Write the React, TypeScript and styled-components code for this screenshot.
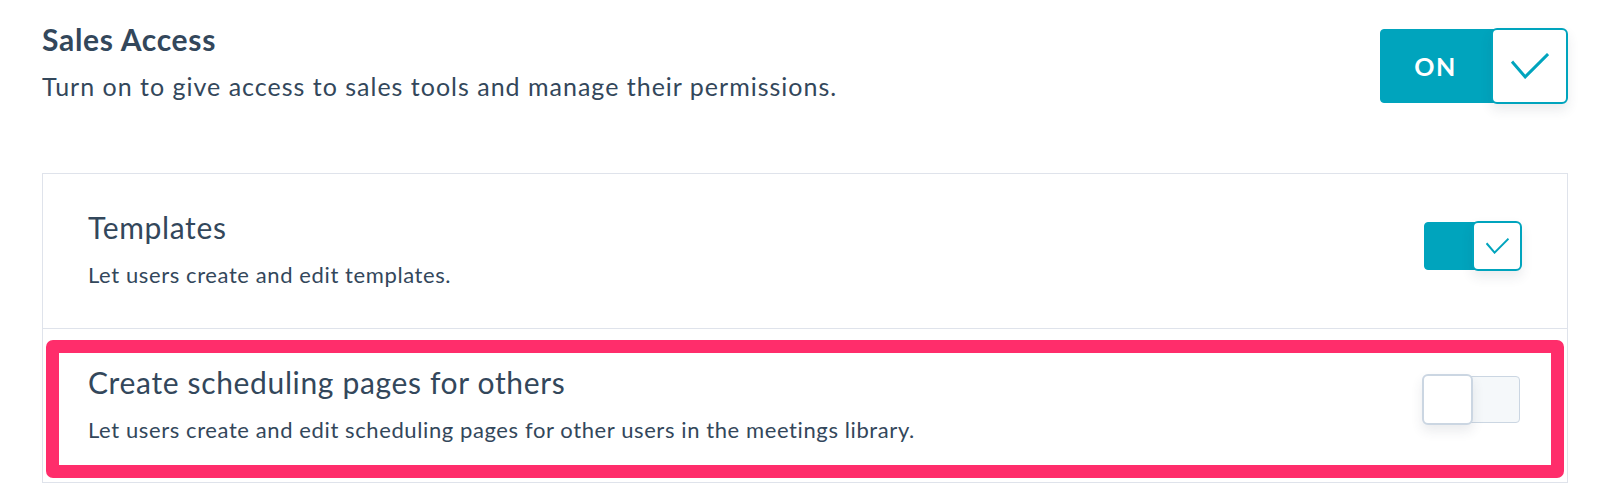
import styled, { createGlobalStyle } from "styled-components";

const GlobalStyle = createGlobalStyle`
  html, body {
    margin: 0;
    padding: 0;
    background: #fff;
  }
  body {
    font-family: Lato, "Open Sans", "Liberation Sans", sans-serif;
    color: #33475b;
    -webkit-font-smoothing: antialiased;
  }
`;

const Page = styled.div`
  width: 1526px;
  margin-left: 42px;
`;

const Header = styled.header`
  display: flex;
  justify-content: space-between;
  align-items: flex-start;
  padding-top: 21px;
`;

const HeaderText = styled.div`
  display: flex;
  flex-direction: column;
`;

const Heading = styled.h2`
  margin: 0;
  font-size: 30px;
  line-height: 36px;
  font-weight: 700;
  letter-spacing: 0.7px;
  color: #33475b;
`;

const Lead = styled.p`
  margin: 13px 0 0;
  font-size: 25px;
  line-height: 32px;
  letter-spacing: 1px;
  color: #33475b;
`;

const Card = styled.section`
  margin-top: 69px;
  border: 1px solid #dfe3eb;
`;

const Row = styled.div<{ $divider?: boolean }>`
  position: relative;
  display: flex;
  justify-content: space-between;
  align-items: flex-start;
  padding: 35px 45px 38px 45px;
  border-top: ${(p) => (p.$divider ? "1px solid #dfe3eb" : "none")};

  &:first-child {
    padding-bottom: 39px;
  }
`;

const RowText = styled.div`
  display: flex;
  flex-direction: column;
`;

const RowTitle = styled.h3`
  margin: 0;
  font-size: 30px;
  line-height: 36px;
  font-weight: 400;
  letter-spacing: 0.65px;
  color: #33475b;
`;

const RowDesc = styled.p`
  margin: 16px 0 0;
  font-size: 22px;
  line-height: 28px;
  letter-spacing: 0.6px;
  color: #33475b;
`;

const Highlight = styled.div`
  position: absolute;
  top: 11px;
  left: 3px;
  right: 3px;
  bottom: 4px;
  border: 13px solid #ff2d6b;
  border-radius: 7px;
  pointer-events: none;
`;

type Size = "lg" | "sm";

const dims = {
  lg: { w: 188, knob: 77, knobH: 76, top: 7 },
  sm: { w: 98, knob: 50, knobH: 50, top: 12 },
};

const Switch = styled.div<{ $size: Size; $on: boolean }>`
  flex: none;
  display: flex;
  flex-direction: ${(p) => (p.$on ? "row" : "row-reverse")};
  width: ${(p) => dims[p.$size].w}px;
  height: ${(p) => dims[p.$size].knobH + (p.$on ? 0 : 1)}px;
  margin-top: ${(p) => dims[p.$size].top - (p.$on ? 0 : 2)}px;
  margin-right: ${(p) => (p.$on ? 0 : 2)}px;
`;

const Track = styled.div<{ $on: boolean }>`
  flex: 1;
  display: flex;
  align-items: center;
  justify-content: center;
  margin: ${(p) => (p.$on ? "1px -4px 1px 0" : "2px 0 2px -4px")};
  padding-right: ${(p) => (p.$on ? "4px" : "0")};
  background: ${(p) => (p.$on ? "#00a4bd" : "#f5f8fa")};
  border: 1px solid ${(p) => (p.$on ? "#00a4bd" : "#cbd6e2")};
  border-radius: ${(p) => (p.$on ? "4px 0 0 4px" : "0 4px 4px 0")};
  color: #fff;
  font-size: 25px;
  font-weight: 700;
  letter-spacing: 1.5px;
`;

const Knob = styled.div<{ $size: Size; $on: boolean }>`
  position: relative;
  flex: none;
  box-sizing: border-box;
  display: flex;
  align-items: center;
  justify-content: center;
  width: ${(p) => dims[p.$size].knob + (p.$on ? 0 : 1)}px;
  height: 100%;
  background: #fff;
  border: 2px solid ${(p) => (p.$on ? "#00a4bd" : "#cbd6e2")};
  border-radius: 6px;
  box-shadow: 0 6px 12px rgba(45, 62, 80, 0.1);
`;

function Check({ size }: { size: Size }) {
  const w = size === "lg" ? 38 : 23;
  const h = size === "lg" ? 26 : 16;
  return (
    <svg width={w} height={h} viewBox="0 0 38.3 26" fill="none">
      <polyline
        points="2,9.7 14.3,24 36.3,2"
        stroke="#00a4bd"
        strokeWidth={size === "lg" ? 3 : 2}
        vectorEffect="non-scaling-stroke"
        strokeLinecap="square"
      />
    </svg>
  );
}

function Toggle({ size, on, label }: { size: Size; on: boolean; label?: string }) {
  return (
    <Switch $size={size} $on={on}>
      <Track $on={on}>{label}</Track>
      <Knob $size={size} $on={on}>
        {on && <Check size={size} />}
      </Knob>
    </Switch>
  );
}

const permissions = [
  {
    title: "Templates",
    desc: "Let users create and edit templates.",
    on: true,
    highlight: false,
  },
  {
    title: "Create scheduling pages for others",
    desc: "Let users create and edit scheduling pages for other users in the meetings library.",
    on: false,
    highlight: true,
  },
];

export default function App() {
  return (
    <>
      <GlobalStyle />
      <Page>
        <Header>
          <HeaderText>
            <Heading>Sales Access</Heading>
            <Lead>Turn on to give access to sales tools and manage their permissions.</Lead>
          </HeaderText>
          <Toggle size="lg" on label="ON" />
        </Header>
        <Card>
          {permissions.map((p, i) => (
            <Row key={p.title} $divider={i > 0}>
              <RowText>
                <RowTitle>{p.title}</RowTitle>
                <RowDesc>{p.desc}</RowDesc>
              </RowText>
              <Toggle size="sm" on={p.on} />
              {p.highlight && <Highlight />}
            </Row>
          ))}
        </Card>
      </Page>
    </>
  );
}
